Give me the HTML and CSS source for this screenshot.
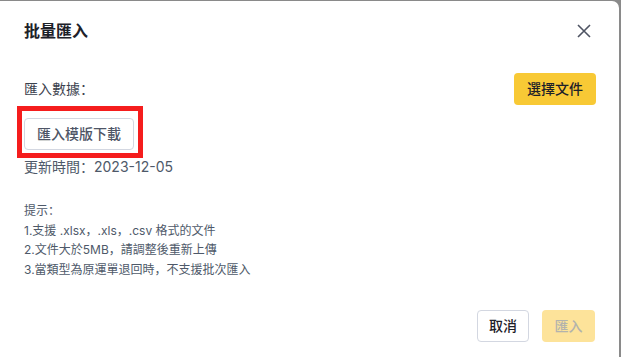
FILE: index.html
```html
<!DOCTYPE html>
<html lang="zh-Hant">
<head>
<meta charset="utf-8">
<title>批量匯入</title>
<link rel="stylesheet" href="styles.css">
</head>
<body>
<div class="modal">
  <div class="header">
    <div class="title">批量匯入</div>
    <button class="close" aria-label="關閉">
      <svg width="14" height="14" viewBox="0 0 14 14"><path d="M1 1L13 13M13 1L1 13" stroke="#4e5463" stroke-width="1.6" fill="none"/></svg>
    </button>
  </div>
  <div class="body">
    <div class="row">
      <span class="label">匯入數據：</span>
      <button class="btn btn-primary">選擇文件</button>
    </div>
    <div class="download-wrap">
      <button class="btn btn-outline">匯入模版下載</button>
    </div>
    <div class="updated">更新時間：2023-12-05</div>
    <div class="hints">
      <div>提示：</div>
      <div>1.支援 .xlsx，.xls，.csv 格式的文件</div>
      <div>2.文件大於5MB，請調整後重新上傳</div>
      <div>3.當類型為原運單退回時，不支援批次匯入</div>
    </div>
  </div>
  <div class="footer">
    <button class="btn btn-cancel">取消</button>
    <button class="btn btn-disabled" disabled>匯入</button>
  </div>
</div>
</body>
</html>
```
FILE: styles.css
```css
* { box-sizing: border-box; }
html, body { margin: 0; padding: 0; }
body {
  background: #8a8a8a;
  width: 621px;
  height: 357px;
  overflow: hidden;
  font-family: Inter, "Noto Sans CJK SC", sans-serif;
  font-feature-settings: "locl" 0;
}
.modal {
  margin-top: 1px;
  width: 619px;
  height: 357px;
  background: #fff;
  border-radius: 0 7px 0 0;
  padding: 0 23px 0 24px;
  display: flex;
  flex-direction: column;
}
.header {
  display: flex;
  justify-content: space-between;
  align-items: flex-start;
  padding-top: 19px;
  height: 60px;
}
.title {
  font-size: 16px;
  font-weight: 700;
  line-height: 22px;
  color: #1d2129;
}
.close {
  border: 0;
  background: none;
  padding: 0;
  margin: 4px 5px 0 0;
  width: 14px;
  height: 14px;
  display: block;
}
.close svg { display: block; }
.body { display: flex; flex-direction: column; align-items: flex-start; }
.row {
  margin-top: 12px;
  width: 100%;
  display: flex;
  align-items: center;
  justify-content: space-between;
}
.label { font-size: 14px; color: #3b414d; line-height: 22px; }
.btn {
  font-family: Inter, "Noto Sans CJK SC", sans-serif;
  font-feature-settings: "locl" 0;
  font-size: 14px;
  font-weight: 500;
  height: 32px;
  line-height: 30px;
  border-radius: 4px;
  border: 1px solid transparent;
  padding: 0 12px;
  cursor: pointer;
}
.btn-primary {
  background: #f8c935;
  color: #1d2129;
  width: 82px;
  padding: 0;
}
.download-wrap {
  position: relative;
  margin-top: 13px;
}
.download-wrap::after {
  content: "";
  position: absolute;
  left: -7px;
  top: -12px;
  right: -9px;
  bottom: -8px;
  border: 5px solid #f51d1d;
  pointer-events: none;
}
.btn-outline {
  display: block;
  background: #fff;
  border-color: #d3d7e1;
  color: #4e5566;
  width: 110px;
  padding: 0;
}
.updated {
  margin-top: 6px;
  font-size: 14px;
  line-height: 22px;
  color: #4e5969;
}
.hints {
  margin-top: 23px;
  font-size: 12px;
  line-height: 19.7px;
  color: #4e5969;
}
.footer {
  margin-top: 30px;
  display: flex;
  justify-content: flex-end;
  gap: 13px;
  padding-right: 1px;
}
.btn-cancel {
  background: #fff;
  border-color: #d3d7e1;
  color: #1d2129;
  width: 52px;
  padding: 0;
}
.btn-disabled {
  background: #fde39a;
  color: #b3b3ad;
  width: 53px;
  padding: 0;
  cursor: not-allowed;
}
```
